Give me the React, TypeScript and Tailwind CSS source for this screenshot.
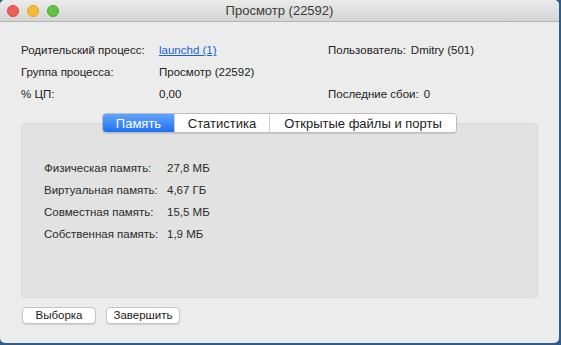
import React from "react";

const font = { fontFamily: '"Liberation Sans", Arial, sans-serif' };

function InfoRow({ label, value, right }: { label: string; value: React.ReactNode; right?: [string, string] }) {
  return (
    <div className="flex h-[22px] items-center">
      <span className="w-[138px]">{label}</span>
      <span className="w-[169px]">{value}</span>
      {right && (
        <span className="flex gap-[5px]">
          <span>{right[0]}</span>
          <span>{right[1]}</span>
        </span>
      )}
    </div>
  );
}

const memory = [
  ["Физическая память:", "27,8 МБ"],
  ["Виртуальная память:", "4,67 ГБ"],
  ["Совместная память:", "15,5 МБ"],
  ["Собственная память:", "1,9 МБ"],
];

const tabs = [
  { name: "Память", w: "w-[71px]", active: true },
  { name: "Статистика", w: "w-[95px]", active: false },
  { name: "Открытые файлы и порты", w: "w-[187px]", active: false },
];

export default function App() {
  return (
    <div className="w-[561px] h-[345px] bg-[#2c5d8c] overflow-hidden" style={font}>
      <div className="w-[559px] h-[343px] rounded-[5px] bg-[#ececec] flex flex-col overflow-hidden">
        {/* title bar */}
        <div className="h-[22px] shrink-0 flex items-center relative bg-gradient-to-b from-[#ebebeb] to-[#d4d4d4] border-b border-[#b4b4b4]">
          <div className="flex gap-[8px] pl-[7px]">
            <span className="w-[12px] h-[12px] rounded-full bg-[#ed5f57] border border-[#d9483f]" />
            <span className="w-[12px] h-[12px] rounded-full bg-[#f4bc33] border border-[#dca22a]" />
            <span className="w-[12px] h-[12px] rounded-full bg-[#5fc440] border border-[#4aa832]" />
          </div>
          <div className="absolute inset-0 flex items-center justify-center text-[13px] text-[#3a3a3a]">
            Просмотр (22592)
          </div>
        </div>

        <div className="px-[21px] text-[11.5px] text-[#222]">
          <div className="pt-[18px]">
            <InfoRow
              label="Родительский процесс:"
              value={<span className="text-[#1662d9] underline">launchd (1)</span>}
              right={["Пользователь:", "Dmitry (501)"]}
            />
            <InfoRow label="Группа процесса:" value="Просмотр (22592)" />
            <InfoRow label="% ЦП:" value="0,00" right={["Последние сбои:", "0"]} />
          </div>

          <div className="mt-[7px] flex flex-col">
            <div className="relative z-10 flex justify-center -mb-[10px]">
              <div className="flex h-[20px] rounded-[4px] border border-[#bdbdbd] bg-white shadow-[0_1px_1px_rgba(0,0,0,0.12)] overflow-hidden text-[13px]">
                {tabs.map((t, i) => (
                  <div
                    key={t.name}
                    className={
                      (t.active
                        ? "bg-gradient-to-b from-[#62a4fb] to-[#1c6ff2] text-white "
                        : "bg-white text-[#222] ") +
                      (i > 0 ? "border-l border-[#cfcfcf] " : "") +
                      t.w +
                      " flex items-center justify-center leading-none"
                    }
                  >
                    {t.name}
                  </div>
                ))}
              </div>
            </div>
            <div className="h-[175px] rounded-[4px] bg-[#e2e2e2] border border-[#d9d9d9] pt-[34px] pl-[22px] text-[#2a2a2a]">
              {memory.map(([l, v]) => (
                <div key={l} className="flex h-[22px] items-center">
                  <span className="w-[123px]">{l}</span>
                  <span>{v}</span>
                </div>
              ))}
            </div>
          </div>

          <div className="mt-[9px] flex gap-[10px] pl-[1px]">
            {["Выборка", "Завершить"].map((b) => (
              <button
                key={b}
                className="w-[74px] h-[17px] rounded-[4px] bg-white border border-[#c6c6c6] shadow-[0_1px_1px_rgba(0,0,0,0.12)] text-[11.5px] text-[#222] flex items-center justify-center leading-none"
              >
                {b}
              </button>
            ))}
          </div>
        </div>
      </div>
    </div>
  );
}
